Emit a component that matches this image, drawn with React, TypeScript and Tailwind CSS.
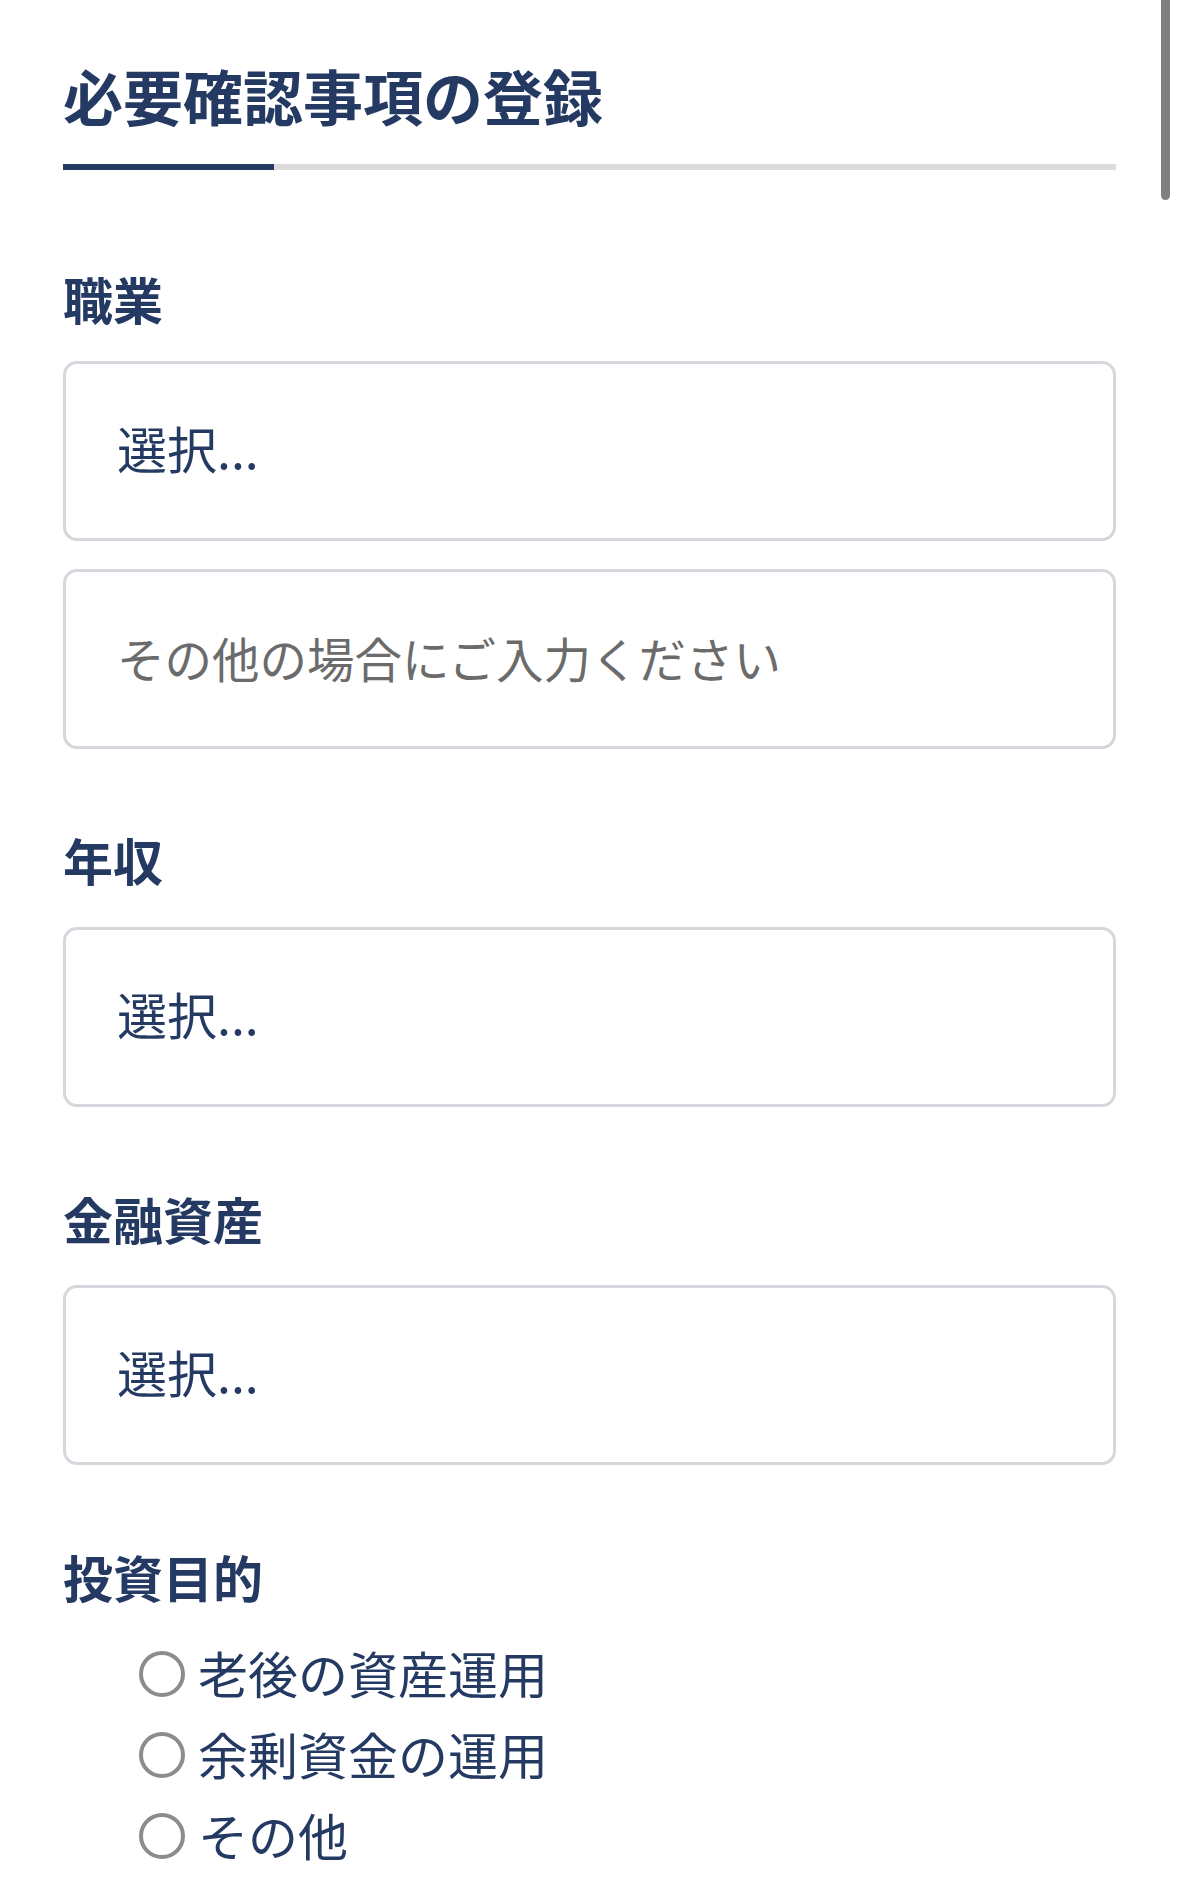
import { useState } from 'react'

const font = "font-['Noto_Sans_CJK_JP','Noto_Sans',sans-serif]"

const purposes = ['老後の資産運用', '余剰資金の運用', 'その他']

const Label = ({ children, className = '' }: { children: string; className?: string }) => (
  <h2 className={`text-[50px] leading-[50px] font-bold text-[#253a63] ${className}`}>{children}</h2>
)

const SelectBox = ({ className = '' }: { className?: string }) => (
  <select
    defaultValue=""
    className={`block w-full h-[180px] appearance-none rounded-[14px] border-[3px] border-[#d5d7dc] bg-white pl-[51px] pb-[7px] text-[50px] text-[#253a63] outline-none ${font} ${className}`}
  >
    <option value="">選択...</option>
  </select>
)

const App = () => {
  const [purpose, setPurpose] = useState<string | null>(null)

  return (
    <div className={`min-h-screen bg-white ${font}`}>
      {/* overlay scrollbar */}
      <div className="fixed right-[9px] top-0 w-[9px] h-[200px] rounded-b-full bg-[#808080]" />

      <div className="px-[63px] pt-[65px] pb-10">
        <h1 className="text-[60px] leading-[60px] font-bold text-[#253a63]">必要確認事項の登録</h1>
        <div className="mt-[39px] flex h-[6px]">
          <div className="w-[211px] bg-[#253a63]" />
          <div className="flex-1 bg-[#dcdcdc]" />
        </div>

        <Label className="mt-[103px]">職業</Label>
        <SelectBox className="mt-[38px]" />
        <input
          placeholder="その他の場合にご入力ください"
          className={`mt-[28px] block w-full h-[180px] rounded-[14px] border-[3px] border-[#d5d7dc] bg-white pl-[51px] pb-[4px] text-[47.5px] text-[#253a63] placeholder:text-[#6b6b6b] outline-none ${font}`}
        />

        <Label className="mt-[85px]">年収</Label>
        <SelectBox className="mt-[43px]" />

        <Label className="mt-[86px]">金融資産</Label>
        <SelectBox className="mt-[42px]" />

        <Label className="mt-[86px]">投資目的</Label>
        <div className="mt-[32px] pl-[76px]">
          {purposes.map(p => (
            <label key={p} className="flex items-center h-[81px] cursor-pointer" onClick={() => setPurpose(p)}>
              <span className="w-[46px] h-[46px] rounded-full border-[4px] border-[#8c8c8c] flex items-center justify-center">
                {purpose === p && <span className="w-[24px] h-[24px] rounded-full bg-[#253a63]" />}
              </span>
              <span className="ml-[13px] text-[50px] leading-[60px] text-[#253a63] pb-[4px]">{p}</span>
            </label>
          ))}
        </div>
      </div>
    </div>
  )
}

export default App
